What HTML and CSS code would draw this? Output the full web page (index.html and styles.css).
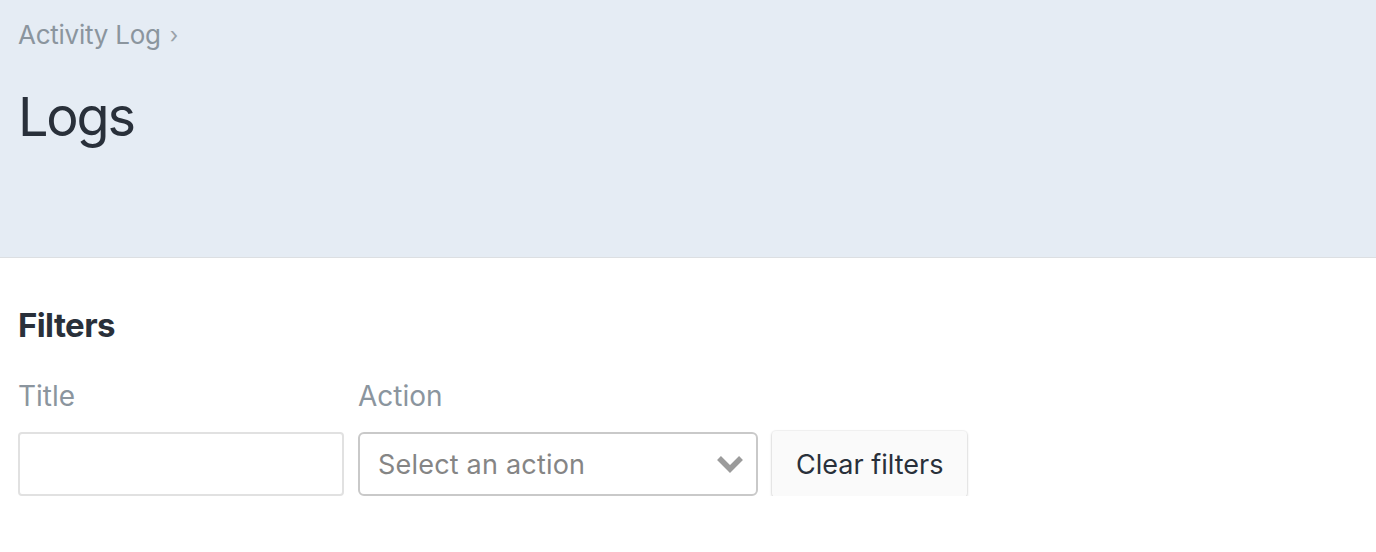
FILE: index.html
```html
<!DOCTYPE html>
<html>
<head>
<meta charset="utf-8">
<link rel="stylesheet" href="styles.css">
</head>
<body>
<header class="page-header">
  <nav class="breadcrumb"><span class="crumb">Activity Log</span><span class="sep">›</span></nav>
  <h1 class="page-title">Logs</h1>
</header>
<main class="content">
  <h2 class="section-title">Filters</h2>
  <div class="filters">
    <div class="field">
      <label class="field-label">Title</label>
      <input class="text-input" type="text">
    </div>
    <div class="field">
      <label class="field-label">Action</label>
      <div class="select">
        <span class="select-placeholder">Select an action</span>
        <svg class="chevron" width="28" height="18" viewBox="0 0 28 18"><path d="M3 3 L14 14 L25 3" fill="none" stroke="#9b9b9b" stroke-width="5.5" stroke-linecap="butt" stroke-linejoin="miter"/></svg>
      </div>
    </div>
    <button class="btn">Clear filters</button>
  </div>
</main>
</body>
</html>
```
FILE: styles.css
```css
* { box-sizing: border-box; }
html, body { margin: 0; padding: 0; background: #fff; }
body { font-family: Inter, "Noto Sans", sans-serif; color: #29303a; }
.page-header {
  background: #e5ecf4;
  border-bottom: 1px solid #dcdfe2;
  height: 258px;
  padding: 19px 18px 0;
}
.breadcrumb { display: flex; align-items: center; gap: 9px; font-size: 26px; line-height: 32px; color: #8b959e; letter-spacing: -0.25px; }
.breadcrumb .sep { font-size: 22px; color: #9aa2a9; }
.page-title { margin: 36px 0 0; font-size: 54px; font-weight: 400; line-height: 60px; color: #29303a; letter-spacing: -2.2px; }
.content { padding: 0 18px; }
.section-title { margin: 47px 0 0; font-size: 33px; font-weight: 700; line-height: 40px; color: #29303a; letter-spacing: -0.6px; }
.filters { display: flex; align-items: flex-end; gap: 14px; margin-top: 34px; }
.field { display: flex; flex-direction: column; }
.field-label { font-size: 28px; line-height: 34px; color: #8b959e; margin-bottom: 19px; }
.text-input { width: 326px; height: 64px; border: 2px solid #e1e1e1; border-radius: 4px; padding: 0 18px; font-size: 27px; font-family: inherit; outline: none; }
.select { width: 400px; height: 64px; border: 2px solid #c9c9c9; border-radius: 6px; display: flex; align-items: center; justify-content: space-between; padding: 0 12px 0 18px; }
.select-placeholder { font-size: 27px; color: #858585; letter-spacing: 0.2px; }
.chevron { display: block; }
.btn { height: 66px; padding: 0 24px; background: #fafafa; border: none; border-radius: 4px; box-shadow: 0 1px 3px rgba(0,0,0,0.2), 0 0 0 1px rgba(0,0,0,0.03); font-family: inherit; font-size: 27px; color: #29303a; cursor: pointer; margin-bottom: -1px; }
```
